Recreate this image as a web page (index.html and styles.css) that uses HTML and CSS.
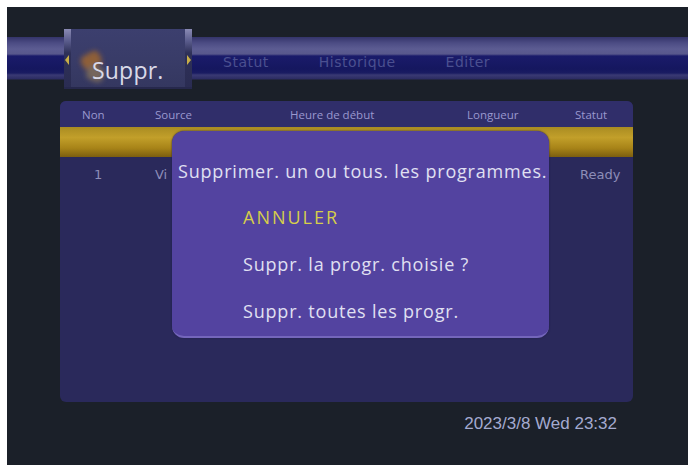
FILE: index.html
```html
<!DOCTYPE html>
<html lang="fr">
<head>
<meta charset="utf-8">
<title>Suppr.</title>
<link rel="stylesheet" href="styles.css">
</head>
<body>
<div class="screen">
  <nav class="tabs">
    <div class="tab tab-active">
      <svg class="tab-icon" width="36" height="42" viewBox="0 0 36 42" aria-hidden="true">
        <defs><filter id="bl"><feGaussianBlur stdDeviation="2.4"/></filter></defs>
        <g filter="url(#bl)">
          <rect x="5" y="7" width="20" height="15" rx="5" fill="#8e5e38" transform="rotate(-28 15 14)"/>
          <rect x="11" y="20" width="17" height="15" rx="5" fill="#74665c" transform="rotate(22 19 27)"/>
        </g>
      </svg>
      <span class="arrow arrow-left"></span>
      <span class="tab-label">Suppr.</span>
      <span class="arrow arrow-right"></span>
    </div>
    <div class="tab tab-first">Statut</div>
    <div class="tab">Historique</div>
    <div class="tab">Editer</div>
  </nav>

  <section class="panel">
    <div class="row head">
      <span>Non</span><span>Source</span><span>Heure de début</span><span>Longueur</span><span>Statut</span>
    </div>
    <div class="row selected"><span></span><span></span><span></span><span></span><span></span></div>
    <div class="row item">
      <span class="num">1</span><span class="src">Vi</span><span></span><span></span><span class="state">Ready</span>
    </div>

    <div class="dialog">
      <p class="dialog-title">Supprimer. un ou tous. les programmes.</p>
      <ul class="dialog-options">
        <li class="opt opt-active">ANNULER</li>
        <li class="opt">Suppr. la progr. choisie ?</li>
        <li class="opt">Suppr. toutes les progr.</li>
      </ul>
    </div>
  </section>

  <div class="clock">2023/3/8 Wed 23:32</div>
</div>
</body>
</html>
```

FILE: styles.css
```css
html, body {
  margin: 0;
  padding: 0;
  background: #ffffff;
}

.screen {
  margin: 7px 0 0 7px;
  width: 681px;
  height: 458px;
  background: #1b2029;
  display: flex;
  flex-direction: column;
  position: relative;
  overflow: hidden;
  font-family: "DejaVu Sans", "Open Sans", sans-serif;
}

/* ---------- top tab bar ---------- */
.tabs {
  margin-top: 22px;
  height: 60px;
  display: flex;
  align-items: center;
  padding-left: 57px;
  background: linear-gradient(to bottom,
    transparent 0, transparent 8px,
    #34346a 8px, #4c4c84 14px, #5c5c92 20px, #58588c 25px,
    #1a1b6a 27px, #15175f 40px, #1a1c62 44px,
    #3a3a74 46px, #2c2c62 50px,
    transparent 51px, transparent 60px);
}

.tab {
  color: #4b5090;
  font-size: 14px;
  letter-spacing: 0.5px;
  margin-left: 50px;
  padding-top: 6px;
}

.tab-first {
  margin-left: 31px;
}

.tab-active {
  margin-left: 0;
  padding-top: 0;
  align-self: stretch;
  width: 128px;
  position: relative;
  display: flex;
  align-items: center;
  box-sizing: border-box;
  background:
    linear-gradient(to bottom, #8a8ab4 0, #5a5c8c 12px, #2e3058 24px, #2a2c52 100%) left top / 7px 100% no-repeat,
    linear-gradient(to bottom, #8a8ab4 0, #5a5c8c 12px, #2e3058 24px, #2a2c52 100%) right top / 7px 100% no-repeat,
    linear-gradient(to bottom, #3c3f6e 0, #393c68 50%, #34375f 100%);
  box-shadow: inset 0 -2px 0 #26284c;
}

.tab-icon {
  position: absolute;
  left: 12px;
  top: 17px;
}

.tab-label {
  position: relative;
  color: #d9d9e8;
  font-family: "Open Sans", "DejaVu Sans", sans-serif;
  font-size: 23px;
  letter-spacing: 0.2px;
  padding-top: 22px;
  padding-left: 28px;
}

.arrow {
  position: absolute;
  top: 26px;
  width: 0;
  height: 0;
  border-top: 5px solid transparent;
  border-bottom: 5px solid transparent;
}

.arrow-left {
  left: 1px;
  border-right: 4px solid #c8ae48;
}

.arrow-right {
  right: 1px;
  border-left: 4px solid #c8ae48;
}

/* ---------- list panel ---------- */
.panel {
  margin: 12px 0 0 53px;
  width: 573px;
  height: 301px;
  background: #2a295b;
  border-radius: 6px;
  position: relative;
}

.row {
  display: grid;
  grid-template-columns: 73px 135px 177px 108px 1fr;
  padding-left: 22px;
  align-items: center;
}

.head {
  height: 26px;
  background: #302e6a;
  border-radius: 6px 6px 0 0;
  color: #9a98cf;
  font-size: 11.5px;
  font-family: "Open Sans", "DejaVu Sans", sans-serif;
}

.selected {
  height: 30px;
  background: linear-gradient(to bottom, #a98c22 0, #c29f2a 35%, #a88418 70%, #7c5e10 100%);
}

.item {
  height: 34px;
  color: #8d8db8;
  font-size: 13px;
}

.item .num {
  padding-left: 12px;
}

.item .src {
  white-space: nowrap;
}

.item .state {
  padding-left: 5px;
}

/* ---------- dialog ---------- */
.dialog {
  position: absolute;
  left: 112px;
  top: 30px;
  width: 377px;
  height: 207px;
  box-sizing: border-box;
  background: #5343a0;
  border-radius: 12px;
  border-bottom: 2px solid #7466bb;
  box-shadow: 0 0 2px #1e1c44;
  color: #e0e0f2;
  font-family: "Open Sans", "DejaVu Sans", sans-serif;
}

.dialog-title {
  margin: 29px 0 0 6px;
  font-size: 18px;
  letter-spacing: 0.8px;
  line-height: 22px;
  white-space: nowrap;
}

.dialog-options {
  list-style: none;
  margin: 24px 0 0 71px;
  padding: 0;
  display: flex;
  flex-direction: column;
  gap: 25px;
}

.opt {
  font-size: 18px;
  letter-spacing: 0.8px;
  line-height: 22px;
}

.opt-active {
  color: #d6ce4a;
  letter-spacing: 2px;
}

/* ---------- clock ---------- */
.clock {
  align-self: flex-end;
  margin: 12px 71px 0 0;
  color: #a4aad0;
  font-family: "Liberation Sans", sans-serif;
  font-size: 17px;
}
```
